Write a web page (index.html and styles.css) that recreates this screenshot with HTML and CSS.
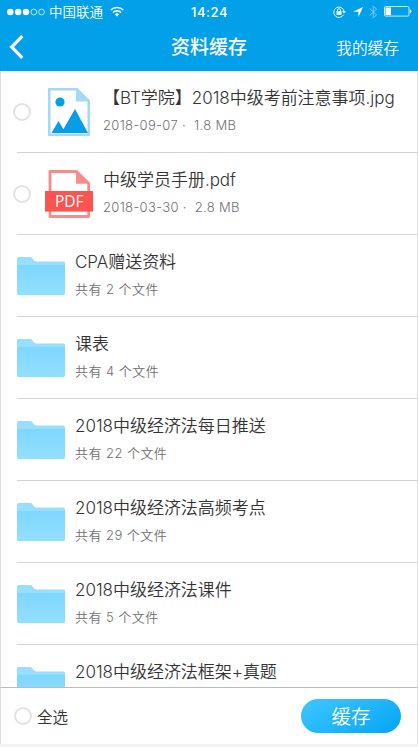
FILE: index.html
```html
<!DOCTYPE html>
<html lang="zh-CN">
<head>
    <meta charset="UTF-8">
    <meta name="viewport" content="width=device-width, initial-scale=1.0">
    <title>资料缓存</title>
    <link rel="stylesheet" href="styles.css">
</head>
<body>
    <!-- shared icons -->
    <svg class="symbols" width="0" height="0">
        <defs>
            <linearGradient id="folder-fill" x1="0" y1="0" x2="0" y2="1">
                <stop offset="0" stop-color="#7fd6ff"/>
                <stop offset="1" stop-color="#92e0ff"/>
            </linearGradient>
        </defs>
        <symbol id="folder" viewBox="0 0 48 38">
            <path d="M0 1.5A1.5 1.5 0 0 1 1.5 0h12c2.5 0 2.5 4.5 6 4.5h27A1.5 1.5 0 0 1 48 6v10H0z" fill="#97deff"/>
            <path d="M0 8h48v28.5a1.5 1.5 0 0 1-1.5 1.5h-45A1.5 1.5 0 0 1 0 36.5z" fill="url(#folder-fill)"/>
        </symbol>
    </svg>

    <header>
        <div class="status-bar">
            <div class="status-left">
                <svg class="signal" width="38" height="8" viewBox="0 0 38 8">
                    <g fill="#fff"><circle cx="3.3" cy="4" r="3.2"/><circle cx="11.2" cy="4" r="3.2"/><circle cx="19" cy="4" r="3.2"/></g>
                    <g fill="none" stroke="#fff" stroke-width=".7"><circle cx="26.8" cy="4" r="2.9"/><circle cx="34.5" cy="4" r="2.9"/></g>
                </svg>
                <span class="carrier">中国联通</span>
                <svg class="wifi" width="14" height="11" viewBox="0 0 14 11">
                    <g fill="none" stroke="#fff" stroke-width="1.6">
                        <path d="M.7 4a9 9 0 0 1 12.6 0"/>
                        <path d="M3 6.5a5.7 5.7 0 0 1 8 0"/>
                    </g>
                    <path d="M4.8 8.2a3.2 3.2 0 0 1 4.4 0L7 10.5z" fill="#fff"/>
                </svg>
            </div>
            <span class="clock">14:24</span>
            <div class="status-right">
                <svg width="13" height="12" viewBox="0 0 13 12">
                    <path d="M10.6 8.6A5.2 5.2 0 1 1 11 5" fill="none" stroke="#fff" stroke-width=".9"/>
                    <path d="M9.2 5h3.6L11 7.4z" fill="#fff"/>
                    <rect x="3.5" y="5.2" width="5" height="3.6" fill="#fff"/>
                    <path d="M4.5 5.4V4.2a1.5 1.5 0 0 1 3 0v1.2" fill="none" stroke="#fff" stroke-width=".9"/>
                </svg>
                <svg class="location" width="10" height="10" viewBox="0 0 10 10">
                    <path d="M10 0L5.4 10V4.8H0z" fill="#fff"/>
                </svg>
                <svg class="bluetooth" width="9" height="14" viewBox="0 0 9 14">
                    <path d="M.6 3.6l7 6.3L4.2 13V1l3.4 3.1-7 6.3" fill="none" stroke="#7fd0f7" stroke-width=".9"/>
                </svg>
                <svg class="battery" width="28" height="11" viewBox="0 0 28 11">
                    <rect x=".5" y=".5" width="24.5" height="9.6" rx="1.3" fill="none" stroke="#e2f4fd" stroke-width=".9"/>
                    <rect x="1.5" y="1.5" width="5.4" height="7.6" fill="#fff"/>
                    <path d="M26 3.2q2.6 2.1 0 4.2z" fill="#fff"/>
                </svg>
            </div>
        </div>
        <nav>
            <a class="back" href="#">
                <svg width="16" height="24" viewBox="0 0 16 24">
                    <path d="M13.3 1.2L2.6 12l10.7 10.8" fill="none" stroke="#fff" stroke-width="3.2"/>
                </svg>
            </a>
            <h1>资料缓存</h1>
            <a class="my-cache" href="#">我的缓存</a>
        </nav>
    </header>

    <main>
        <div class="row">
            <span class="radio"></span>
            <svg class="file-icon" width="48" height="48" viewBox="0 0 48 48">
                <path d="M4.2 1.2h27.6l12 12v33.6H4.2z" fill="#fff" stroke="#a5d8f2" stroke-width="2.6" stroke-linejoin="round"/>
                <path d="M31 0L45 13.5H31z" fill="#a5d8f2"/>
                <circle cx="15" cy="14" r="4.6" fill="#079ee8"/>
                <path d="M6.5 45l7-12 4.9 8.2L30 21l13 24z" fill="#079ee8"/>
            </svg>
            <div class="info">
                <div class="name">【BT学院】2018中级考前注意事项.jpg</div>
                <div class="meta date">2018-09-07 ·&nbsp; 1.8 MB</div>
            </div>
        </div>
        <div class="row">
            <span class="radio"></span>
            <svg class="file-icon" width="48" height="48" viewBox="0 0 48 48">
                <path d="M5 1.5h26.5l12.2 12v33H5z" fill="#fff" stroke="#fa8b8b" stroke-width="2.8" stroke-linejoin="round"/>
                <path d="M31 0L45 13.8H31z" fill="#fa8b8b"/>
                <rect y="21" width="48" height="20.6" fill="#f9544f"/>
                <text class="pdf-label" x="24.2" y="36.8" text-anchor="middle">PDF</text>
            </svg>
            <div class="info">
                <div class="name">中级学员手册.pdf</div>
                <div class="meta date">2018-03-30 ·&nbsp; 2.8 MB</div>
            </div>
        </div>
        <div class="row">
            <svg class="folder" width="48" height="38"><use href="#folder"/></svg>
            <div class="info">
                <div class="name">CPA赠送资料</div>
                <div class="meta">共有 2 个文件</div>
            </div>
        </div>
        <div class="row">
            <svg class="folder" width="48" height="38"><use href="#folder"/></svg>
            <div class="info">
                <div class="name">课表</div>
                <div class="meta">共有 4 个文件</div>
            </div>
        </div>
        <div class="row">
            <svg class="folder" width="48" height="38"><use href="#folder"/></svg>
            <div class="info">
                <div class="name">2018中级经济法每日推送</div>
                <div class="meta">共有 22 个文件</div>
            </div>
        </div>
        <div class="row">
            <svg class="folder" width="48" height="38"><use href="#folder"/></svg>
            <div class="info">
                <div class="name">2018中级经济法高频考点</div>
                <div class="meta">共有 29 个文件</div>
            </div>
        </div>
        <div class="row">
            <svg class="folder" width="48" height="38"><use href="#folder"/></svg>
            <div class="info">
                <div class="name">2018中级经济法课件</div>
                <div class="meta">共有 5 个文件</div>
            </div>
        </div>
        <div class="row">
            <svg class="folder" width="48" height="38"><use href="#folder"/></svg>
            <div class="info">
                <div class="name">2018中级经济法框架+真题</div>
            </div>
        </div>
    </main>

    <footer>
        <span class="radio"></span>
        <span class="select-all">全选</span>
        <button class="cache-button">缓存</button>
    </footer>
</body>
</html>
```

FILE: styles.css
```css
* {
    box-sizing: border-box;
}

body {
    font-family: Inter, "Noto Sans CJK SC", sans-serif;
    margin: 0;
    height: 747px;
    display: flex;
    flex-direction: column;
    overflow: hidden;
    background-color: #f3f3f3;
    color: #333;
}

.symbols {
    position: absolute;
}

svg {
    flex: none;
    display: block;
}

header {
    flex: none;
    height: 71px;
    background-color: #02a0e9;
    color: #fff;
}

/* Status bar */
.status-bar {
    height: 23px;
    display: grid;
    grid-template-columns: 1fr auto 1fr;
    align-items: center;
    padding: 0 6px 0 7px;
}

.status-left,
.status-right {
    display: flex;
    align-items: center;
}

.status-right {
    justify-content: flex-end;
}

.carrier {
    font-size: 13.5px;
    font-weight: 350;
    line-height: 18px;
    margin: 0 7px 0 4px;
}

.clock {
    font-size: 13px;
    font-weight: 500;
    letter-spacing: 0.6px;
}

.location {
    margin-left: 7px;
}

.bluetooth {
    margin-left: 6px;
}

.battery {
    margin-left: 6px;
}

/* Title bar */
nav {
    height: 48px;
    display: grid;
    grid-template-columns: 1fr auto 1fr;
    align-items: center;
    padding: 0 19px 0 9px;
}

h1 {
    margin: 2px 0 0 10px;
    font-size: 19px;
    font-weight: 500;
    line-height: 28px;
}

.my-cache {
    justify-self: end;
    color: #fff;
    font-size: 15.7px;
    font-weight: 350;
    text-decoration: none;
}

/* File list */
main {
    flex: 1;
    min-height: 0;
    overflow: hidden;
    background-color: #fff;
    border-left: 1px solid #ddd;
    border-right: 1px solid #ddd;
}

.row {
    height: 82px;
    display: flex;
    align-items: center;
    margin-left: 16px;
    border-bottom: 1px solid #d4d4d4;
}

.radio {
    flex: none;
    width: 18px;
    height: 18px;
    border: 2px solid #e2e2e2;
    border-radius: 50%;
}

.row .radio {
    margin-left: -4px;
}

.file-icon {
    margin: 0 10px 0 14px;
}

.folder {
    margin-right: 10px;
}

.info {
    height: 60px;
    white-space: nowrap;
}

.name {
    font-size: 17px;
    font-weight: 350;
    letter-spacing: -0.02px;
    line-height: 32px;
}

.meta {
    font-size: 13px;
    font-weight: 350;
    letter-spacing: 0.45px;
    line-height: 23px;
    color: #707070;
}

.date {
    letter-spacing: 0.33px;
}

.pdf-label {
    font-family: "Open Sans", sans-serif;
    font-size: 15.5px;
    fill: #fff;
}

/* Bottom bar */
footer {
    flex: none;
    height: 57px;
    margin-bottom: 3px;
    display: flex;
    align-items: center;
    padding: 0 16px 1px 13px;
    background-color: #fff;
    border: 1px solid #ddd;
    border-top-color: #bbb;
    border-bottom: none;
}

.select-all {
    margin-left: 5px;
    font-size: 15.5px;
    font-weight: 350;
}

.cache-button {
    width: 100px;
    height: 34px;
    margin-left: auto;
    padding: 0;
    border: none;
    border-radius: 17px;
    background: linear-gradient(150deg, #40c7ff, #05a4f5);
    color: #fff;
    font-family: inherit;
    font-size: 19.5px;
    font-weight: 350;
    cursor: pointer;
}
```
